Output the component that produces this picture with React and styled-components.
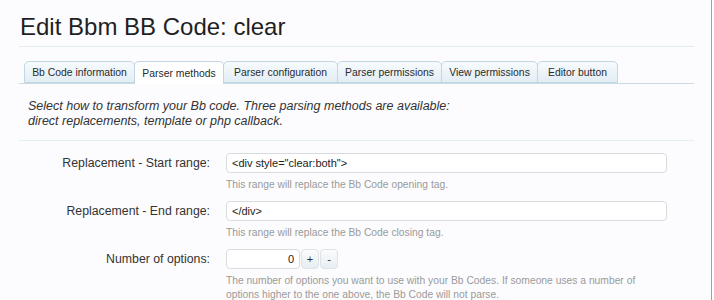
import React, { useState } from "react";
import styled, { createGlobalStyle } from "styled-components";

const GlobalStyle = createGlobalStyle`
  html, body {
    margin: 0;
    padding: 0;
    background: #ffffff;
  }
  body {
    font-family: "Liberation Sans", Arial, sans-serif;
    color: #2b2b2b;
  }
`;

const Window = styled.div`
  width: 711px;
  height: 300px;
  overflow: hidden;
  background: #fcfcfe;
  border-right: 1px solid #9aa3a6;
`;

const Content = styled.div`
  width: 675px;
  padding: 14px 0 0 19px;
`;

const Title = styled.h1`
  margin: 0;
  padding: 0 0 6px 1px;
  font-size: 24px;
  font-weight: normal;
  line-height: 26px;
  color: #1f1f23;
  border-bottom: 1px solid #e3edf1;
`;

const TabBar = styled.div`
  display: flex;
  margin-top: 14px;
  padding-left: 5px;
  border-bottom: 1px solid #c9dce6;
  height: 22px;
`;

const Tab = styled.div`
  box-sizing: border-box;
  width: ${({ $width }) => $width}px;
  height: ${({ $active }) => ($active ? "23px" : "22px")};
  display: flex;
  align-items: center;
  justify-content: center;
  font-size: 10.4px;
  color: #2a2a2a;
  border: 1px solid #c3d6e2;
  border-bottom: ${({ $active }) => ($active ? "none" : "1px solid #c3d6e2")};
  border-radius: 5px 5px 0 0;
  background: ${({ $active }) =>
    $active ? "#ffffff" : "linear-gradient(#f7fbfd, #e2edf4)"};
  margin-right: -1px;
  cursor: pointer;
  white-space: nowrap;
`;

const Intro = styled.p`
  margin: 15px 0 0 9px;
  font-size: 12.5px;
  line-height: 15px;
  font-style: italic;
  color: #333;
`;

const Separator = styled.div`
  margin-top: 11px;
  height: 1px;
  background: #e2eff2;
`;

const Form = styled.div`
  display: flex;
  flex-direction: column;
  gap: 9px;
  padding-top: 12px;
`;

const Row = styled.div`
  display: grid;
  grid-template-columns: 191px 441px;
  column-gap: 16px;
`;

const Label = styled.label`
  text-align: right;
  font-size: 12.3px;
  line-height: 20px;
  color: #333;
`;

const Field = styled.div`
  display: flex;
  flex-direction: column;
`;

const Controls = styled.div`
  display: flex;
  align-items: center;
  gap: 1px;
`;

const Input = styled.input`
  box-sizing: border-box;
  width: ${({ $width }) => $width || "441px"};
  height: 20px;
  padding: 0 5px;
  border: 1px solid #d9dcdf;
  border-radius: 4px;
  background: #fff;
  font-family: "Liberation Sans", Arial, sans-serif;
  font-size: 11px;
  color: #222;
  text-align: ${({ $align }) => $align || "left"};
  outline: none;
`;

const SpinButton = styled.button`
  box-sizing: border-box;
  width: 18px;
  height: 20px;
  padding: 0;
  border: 1px solid #dde3e8;
  border-radius: 4px;
  background: linear-gradient(#fbfcfd, #e7edf1);
  font-family: "Liberation Sans", Arial, sans-serif;
  font-size: 11px;
  color: #333;
  cursor: pointer;
`;

const Hint = styled.div`
  margin-top: 5px;
  font-size: 10.3px;
  line-height: 14px;
  color: #9a9a9a;
  width: 430px;
`;

const tabs = [
  { name: "Bb Code information", width: 111 },
  { name: "Parser methods", width: 90 },
  { name: "Parser configuration", width: 115 },
  { name: "Parser permissions", width: 105 },
  { name: "View permissions", width: 97 },
  { name: "Editor button", width: 81 },
];

const App = () => {
  const [active, setActive] = useState(1);
  const [options, setOptions] = useState(0);

  return (
    <Window>
      <GlobalStyle />
      <Content>
        <Title>Edit Bbm BB Code: clear</Title>
        <TabBar>
          {tabs.map((t, i) => (
            <Tab
              key={t.name}
              $active={i === active}
              $width={t.width}
              onClick={() => setActive(i)}
            >
              {t.name}
            </Tab>
          ))}
        </TabBar>
        <Intro>
          Select how to transform your Bb code. Three parsing methods are available:
          <br />
          direct replacements, template or php callback.
        </Intro>
        <Separator />
        <Form>
          <Row>
            <Label>Replacement - Start range:</Label>
            <Field>
              <Input defaultValue={'<div style="clear:both">'} />
              <Hint>This range will replace the Bb Code opening tag.</Hint>
            </Field>
          </Row>
          <Row>
            <Label>Replacement - End range:</Label>
            <Field>
              <Input defaultValue="</div>" />
              <Hint>This range will replace the Bb Code closing tag.</Hint>
            </Field>
          </Row>
          <Row>
            <Label>Number of options:</Label>
            <Field>
              <Controls>
                <Input
                  $width="74px"
                  $align="right"
                  value={options}
                  onChange={(e) => setOptions(Number(e.target.value) || 0)}
                />
                <SpinButton onClick={() => setOptions(options + 1)}>+</SpinButton>
                <SpinButton onClick={() => setOptions(Math.max(0, options - 1))}>
                  -
                </SpinButton>
              </Controls>
              <Hint>
                The number of options you want to use with your Bb Codes. If someone
                uses a number of options higher to the one above, the Bb Code will not
                parse.
              </Hint>
            </Field>
          </Row>
        </Form>
      </Content>
    </Window>
  );
};

export default App;
